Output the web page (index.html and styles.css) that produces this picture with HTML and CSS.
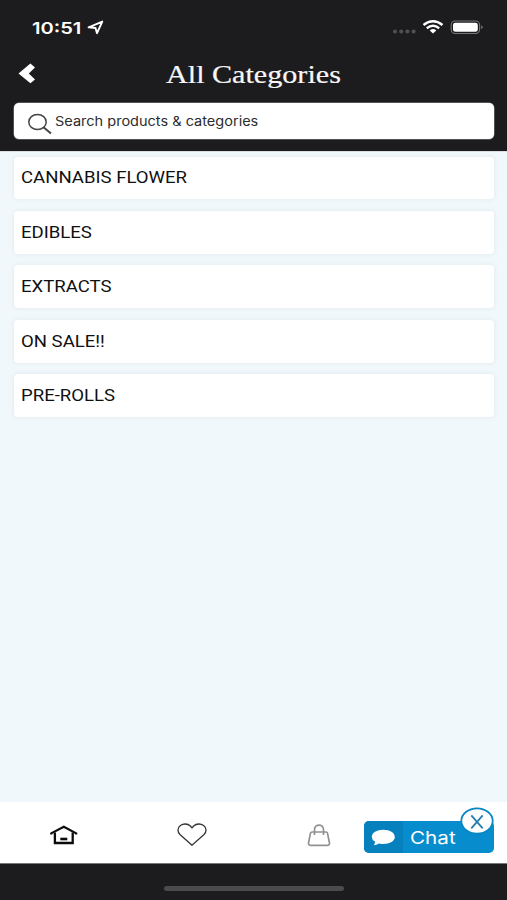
FILE: index.html
```html
<!DOCTYPE html>
<html lang="en">
<head>
<meta charset="utf-8">
<title>All Categories</title>
<link rel="stylesheet" href="styles.css">
</head>
<body>
<div class="app">
  <header class="header">
    <div class="status">
      <span class="time">10:51</span>
      <svg class="locate" width="18" height="16" viewBox="0 0 18 16"><path d="M1.6 8.3 15.3 2.6 10 14.2 8.5 9Z" fill="none" stroke="#fff" stroke-width="1.9" stroke-linejoin="round"/></svg>
      <svg class="signal" width="92" height="18" viewBox="0 0 92 18">
        <g fill="#515153"><circle cx="3" cy="13.6" r="2"/><circle cx="9.2" cy="13.6" r="2"/><circle cx="15.4" cy="13.6" r="2"/><circle cx="21.6" cy="13.6" r="2"/></g>
        <g fill="none" stroke="#fff" stroke-width="2.4"><path d="M31.5 7Q41 -.5 50.5 7"/><path d="M34.8 10.2Q41 5.5 47.2 10.2"/></g>
        <path d="M37.7 12.4Q41 9.8 44.3 12.4L41 15.5Z" fill="#fff"/>
        <rect x="59.2" y="3" width="28.4" height="12.5" rx="4" fill="none" stroke="#77777a" stroke-width="1.1"/>
        <rect x="61" y="4.7" width="24.8" height="9.1" rx="2.4" fill="#fff"/>
        <path d="M89.2 7.3Q92.2 9.2 89.2 11.1Z" fill="#77777a"/>
      </svg>
    </div>
    <div class="titlebar">
      <svg class="back" width="18" height="21" viewBox="0 0 18 21"><path d="M12.4 .6 17 4.4 10.8 10.5 17 16.6 12.4 20.3 .5 10.5Z" fill="#fff"/></svg>
      <h1 class="title">All Categories</h1>
    </div>
    <div class="search">
      <svg width="26" height="22" viewBox="0 0 26 22"><g fill="none" stroke="#444" stroke-width="1.5"><ellipse cx="10.5" cy="9" rx="8.7" ry="7.6"/><path d="M16.5 14.3 24 20.5" stroke-width="2"/></g></svg>
      <span class="placeholder">Search products &amp; categories</span>
    </div>
  </header>
  <main class="list">
    <div class="card"><span>CANNABIS FLOWER</span></div>
    <div class="card"><span>EDIBLES</span></div>
    <div class="card"><span>EXTRACTS</span></div>
    <div class="card"><span>ON SALE!!</span></div>
    <div class="card"><span>PRE-ROLLS</span></div>
  </main>
  <nav class="tabs">
    <svg class="home" width="28" height="21" viewBox="0 0 28 21"><g fill="none" stroke="#0b0b0b" stroke-width="2.1"><path d="M1.2 10.6V9.3L13.8 2.8 26.2 9.3V10.6"/><path d="M4.9 8.5V19H22.7V8.5" stroke-width="2.3"/><path d="M10.3 15H17.3" stroke-width="2.6"/></g></svg>
    <svg class="heart" width="30" height="24" viewBox="0 0 30 24"><path d="M15 22.2 3.2 11.8C.2 9 .2 4.8 3.4 2.5 6.4.4 10.6.5 13 2.8L15 4.8 17 2.8C19.4.5 23.6.4 26.6 2.5 29.8 4.8 29.8 9 26.8 11.8Z" fill="none" stroke="#333" stroke-width="1.3"/></svg>
    <svg class="bag" width="24" height="23" viewBox="0 0 24 23"><g fill="none" stroke="#929292" stroke-width="1.7" stroke-linejoin="round"><path d="M5 8H19Q20.2 8 20.5 9.1L22.4 18.5Q23 21.4 20 21.4H4Q1 21.4 1.6 18.5L3.5 9.1Q3.8 8 5 8Z"/><path d="M7.5 11V5.5C7.5-.4 16.5-.4 16.5 5.5V11"/></g></svg>
    <div class="chat">
      <div class="bubble"><svg width="25" height="17" viewBox="0 0 25 17"><path d="M12.3.8C18.9.8 23.8 3.9 23.8 7.9S18.9 14.9 12.3 14.9Q10.1 14.9 8 14.4 5.5 16 2.9 16.2 4 14.5 4 12.5 .8 10.6 .8 7.9C.8 3.9 5.7.8 12.3.8Z" fill="#fff"/></svg></div>
      <span class="chat-text">Chat</span>
      <svg class="close" width="34" height="28" viewBox="0 0 34 28"><ellipse cx="17" cy="14" rx="15.7" ry="12.7" fill="#fff" stroke="#0787c5" stroke-width="1.8"/><path d="M11.3 8.3 22.7 21.3M22.7 8.3 11.3 21.3" stroke="#247fae" stroke-width="1.8"/></svg>
    </div>
  </nav>
  <footer class="bottom"><div class="indicator"></div></footer>
</div>
</body>
</html>
```
FILE: styles.css
```css
* { box-sizing: border-box; }
body { margin: 0; background: #1c1c1e; }
svg { display: block; flex: none; }
.app { width: 507px; height: 900px; display: flex; flex-direction: column; overflow: hidden; }
.header { height: 151px; flex: none; background: #1c1c1e; padding: 18px 13px 0 14px; display: flex; flex-direction: column; }
.status { height: 18px; display: flex; align-items: center; padding-left: 18px; color: #fff; }
.time { width: 55px; padding-top: 1px; font: 600 16.5px/18px Inter, sans-serif; white-space: nowrap; transform: scaleX(1.22); transform-origin: left; }
.signal { margin-left: auto; margin-right: 10px; }
.titlebar { height: 48px; margin-top: 12px; display: flex; align-items: center; padding: 0 0 0 4px; }
.back { margin-top: 3px; }
.title { margin: 5px 0 0 130px; font: 400 25px/30px "Liberation Serif", serif; color: #f7f7f7; white-space: nowrap; -webkit-text-stroke: .2px #f7f7f7; transform: scaleX(1.205); transform-origin: left; }
.search { height: 36px; margin-top: 7px; flex: none; border-radius: 5px; background: #fff; display: flex; align-items: center; padding-left: 13px; box-shadow: 0 0 0 .5px #88888a; }
.search svg { margin-top: 5px; }
.placeholder { margin-left: 2px; font: 400 13px/18px Inter, sans-serif; color: #2c2c2c; white-space: nowrap; transform: scaleX(1.117); transform-origin: left; }
.list { flex: 1; background: #f0f8fb; border-top: 1px solid #d9dfe1; padding: 4.6px 13px 0 14px; display: flex; flex-direction: column; gap: 11.6px; }
.card { height: 42.8px; flex: none; background: #fff; border-radius: 4px; box-shadow: 0 0 4px #e1e6ea; padding: 1px 0 0 6.5px; display: flex; align-items: center; font: 400 15.6px/20px Roboto, sans-serif; color: #101010; }
.card span { transform: scaleX(1.19); transform-origin: left; white-space: nowrap; }
.tabs { height: 61px; flex: none; background: #fff; display: flex; align-items: flex-start; padding-left: 50px; }
.home { margin-top: 22px; }
.heart { margin: 21px 0 0 99px; }
.bag { margin: 22px 0 0 100px; }
.chat { position: relative; width: 130px; height: 32px; margin: 19px 0 0 33px; border-radius: 5px; background: #078dcd; display: flex; align-items: center; overflow: visible; }
.bubble { width: 39px; height: 32px; background: #0781bd; border-radius: 5px 0 0 5px; padding: 8px 0 0 7px; }
.chat-text { margin-left: 7px; padding-top: 1px; font: 400 17.5px/24px Inter, sans-serif; color: #fff; transform: scaleX(1.18); transform-origin: left; }
.close { position: absolute; right: 0; top: -14px; }
.bottom { height: 37px; flex: none; background: #1c1c1e; border-top: 1px solid #777; padding: 22px 0 0 164px; }
.indicator { width: 180px; height: 5px; border-radius: 3px; background: #4b4b4d; }
```
